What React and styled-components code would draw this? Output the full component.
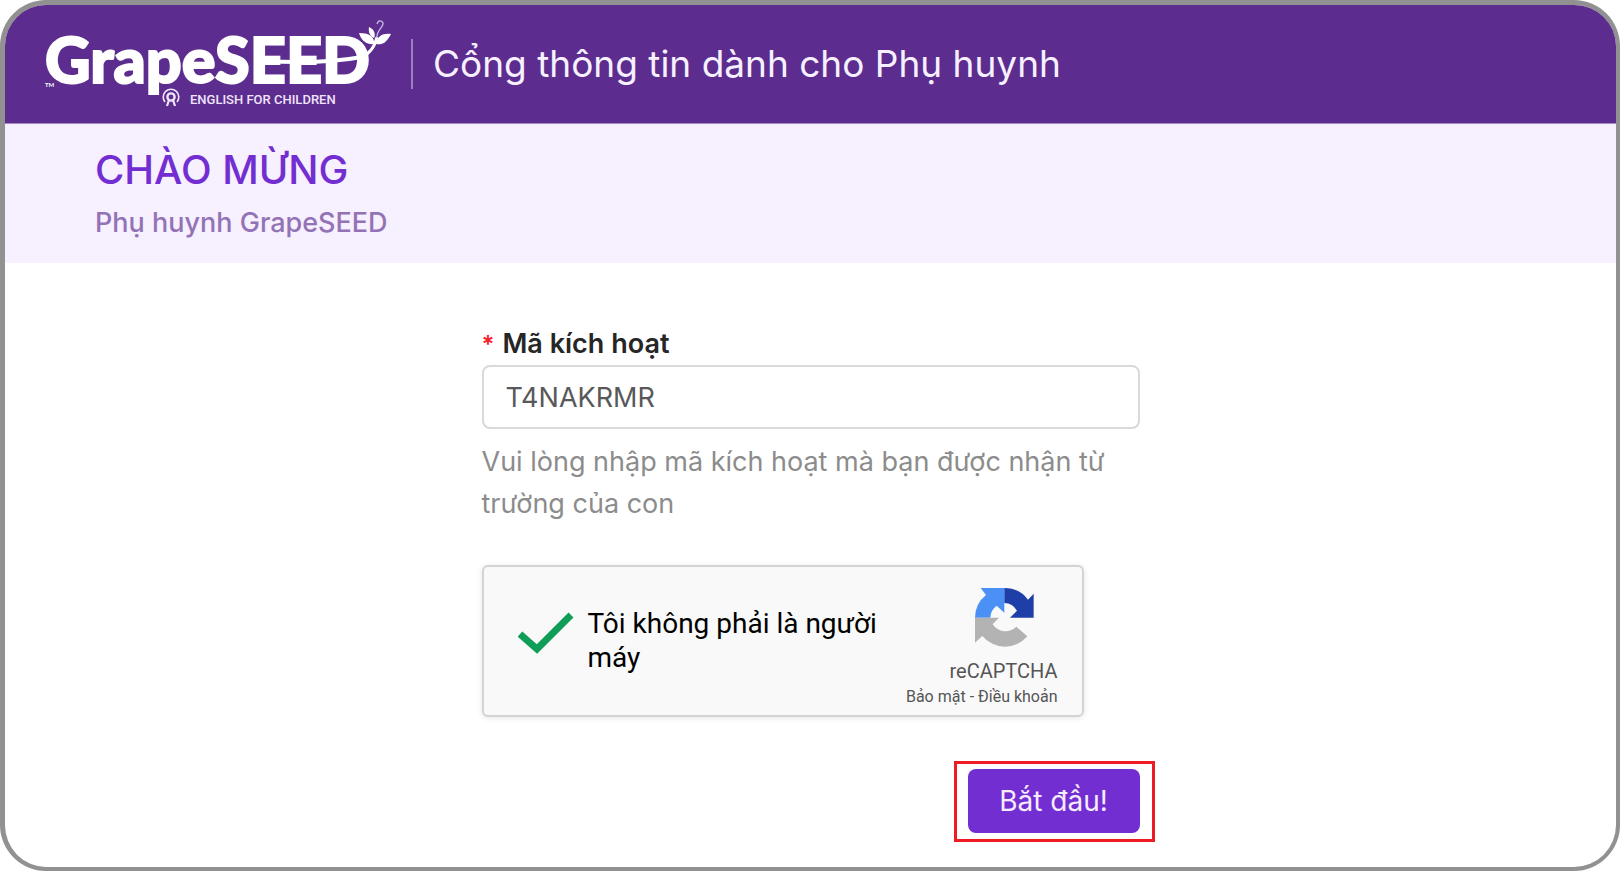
import React, { useState } from 'react'
import styled, { createGlobalStyle } from 'styled-components'

const GlobalStyle = createGlobalStyle`
    * {
        box-sizing:border-box;
        margin:0;
        padding:0;
    }
    body {
        background-color:white;
        font-family:Inter, "Liberation Sans", sans-serif;
    }
`
const Frame = styled.div`
    display:flex;
    flex-direction:column;
    min-height:100vh;
    border-style:solid;
    border-color:#919191;
    border-width:5px 4px 4px 5px;
    border-radius:46px;
    overflow:hidden;
    background-color:white;
`
const Header = styled.header`
    display:flex;
    align-items:center;
    height:119px;
    padding-left:38px;
    background-color:#5c2d8f;
    border-bottom:1px solid #a688c4;
`
const Logo = styled.svg`
    width:352px;
    height:96px;
    flex-shrink:0;
`
const Divider = styled.div`
    width:2px;
    height:50px;
    margin:0 20px 0 16px;
    background-color:#9d7fc0;
`
const PortalName = styled.h1`
    font-size:37px;
    line-height:48px;
    font-weight:400;
    color:#f7f0ff;
`
const Banner = styled.section`
    height:139px;
    padding:16px 90px;
    background-color:#f6f0ff;
`
const Welcome = styled.h2`
    font-size:40px;
    line-height:60px;
    font-weight:500;
    color:#722ed1;
`
const Audience = styled.p`
    font-size:27px;
    line-height:46px;
    font-weight:500;
    color:#9373b5;
`
const Form = styled.form`
    display:flex;
    flex-direction:column;
    width:100%;
    max-width:658px;
    margin:0 auto;
    padding:61px 0 24px;
`
const Label = styled.label`
    font-size:27px;
    line-height:40px;
    font-weight:600;
    color:#262626;
`
const Required = styled.span`
    margin-right:8px;
    font-size:24px;
    color:#f5222d;
`
const Input = styled.input`
    height:64px;
    padding:0 22px;
    border:2px solid #d9d9d9;
    border-radius:8px;
    font-family:inherit;
    font-size:27px;
    color:#595959;
    outline:none;
`
const Hint = styled.p`
    margin-top:12px;
    font-size:27px;
    line-height:42px;
    color:#8c8c8c;
`
const Captcha = styled.div`
    display:flex;
    justify-content:space-between;
    width:602px;
    max-width:100%;
    height:152px;
    margin-top:40px;
    padding:20px 24px 0 34px;
    border:2px solid #d3d3d3;
    border-radius:6px;
    box-shadow:0 1px 6px rgba(0,0,0,0.1);
    background-color:#f9f9f9;
    font-family:Roboto, sans-serif;
`
const Robot = styled.label`
    display:flex;
    align-items:flex-start;
    padding-top:20px;
    font-size:28px;
    line-height:34px;
    color:black;
`
const Tick = styled.input`
    position:absolute;
    opacity:0;
`
const CheckMark = styled.svg`
    width:56px;
    height:44px;
    flex-shrink:0;
    margin:4px 14px 0 0;
`
const RobotText = styled.span`
    width:300px;
`
const Brand = styled.div`
    display:flex;
    flex-direction:column;
    align-items:flex-end;
    font-size:20px;
    line-height:28px;
    color:#555;
`
const Arrows = styled.svg`
    width:62px;
    height:62px;
    margin:0 22px 8px 0;
`
const Terms = styled.div`
    font-size:16px;
    line-height:24px;
    white-space:nowrap;
`
const TermsLink = styled.a`
    color:inherit;
    text-decoration:none;
`
const Highlight = styled.div`
    align-self:flex-end;
    margin:44px -15px 0 0;
    padding:5px 12px 6px 11px;
    border:3px solid #ed1c24;
`
const Button = styled.button`
    display:block;
    width:172px;
    height:64px;
    border:none;
    border-radius:8px;
    background-color:#722ed1;
    color:#f5ecff;
    font-family:inherit;
    font-size:28px;
    cursor:pointer;
`

const GrapeSeedLogo = () => (
    <Logo viewBox="43 16 352 96" role="img" aria-label="GrapeSEED English for children">
        <g fill="white" fontFamily="Lato, sans-serif">
            <text x="45" y="83" fontSize="63" fontWeight="900" stroke="white" strokeWidth="2">GrapeSEED</text>
            <text x="45" y="87" fontSize="6" fontWeight="700">TM</text>
            <text x="190" y="104" fontSize="13" fontWeight="500" fontFamily="Roboto, sans-serif" fill="#f0e4fb">ENGLISH FOR CHILDREN</text>
        </g>
        {/* vine running through the letters and up to the leaves */}
        <path d="M264 61 C300 63 335 62 362 57" fill="none" stroke="white" strokeWidth="4"/>
        <path d="M360 58 C370 54 375 46 377 37" fill="none" stroke="white" strokeWidth="3"/>
        <path d="M377 38 C376 30 384 27 383 23 C382 20 378 20 377 24" fill="none" stroke="#cdb8e2" strokeWidth="1.3"/>
        <g fill="white">
            <path d="M359 33 C368 33 375 36 374 44 C366 45 361 40 359 33Z"/>
            <path d="M369 27 C374 29 376 34 374 38 C370 36 368 32 369 27Z"/>
            <path d="M391 34 C386 44 381 45 376 44 C377 36 383 33 391 34Z"/>
        </g>
        <g fill="none" stroke="#f0e4fb" strokeWidth="1.6">
            <path d="M165 102 A7.8 7.8 0 1 1 177 102"/>
            <circle cx="171" cy="97" r="3.6" strokeWidth="2.4"/>
            <path d="M169 100 L167 106 M173 100 L175 106" strokeWidth="2.2"/>
        </g>
    </Logo>
)

const App = () => {
    const [code, setCode] = useState('T4NAKRMR')
    const [human, setHuman] = useState(true)
    return (
        <Frame>
            <GlobalStyle/>
            <Header>
                <GrapeSeedLogo/>
                <Divider/>
                <PortalName>Cổng thông tin dành cho Phụ huynh</PortalName>
            </Header>
            <Banner>
                <Welcome>CHÀO MỪNG</Welcome>
                <Audience>Phụ huynh GrapeSEED</Audience>
            </Banner>
            <Form onSubmit={(e) => e.preventDefault()}>
                <Label htmlFor="code"><Required>*</Required>Mã kích hoạt</Label>
                <Input id="code" value={code} onChange={(e) => setCode(e.target.value)}/>
                <Hint>Vui lòng nhập mã kích hoạt mà bạn được nhận từ trường của con</Hint>
                <Captcha>
                    <Robot>
                        <Tick type="checkbox" checked={human} onChange={() => setHuman(!human)}/>
                        <CheckMark viewBox="0 0 56 44">
                            {human && <path d="M2 23 L19 38 L53 4" fill="none" stroke="#0f9d58" strokeWidth="7"/>}
                        </CheckMark>
                        <RobotText>Tôi không phải là người máy</RobotText>
                    </Robot>
                    <Brand>
                        <Arrows viewBox="0 0 186 186">
                            <path d="M3 92 A88 88 0 0 1 36 24 L20 3 H91 V77 L68 56 A46 46 0 0 0 49 92Z" fill="#4a90f5"/>
                            <path d="M91 3 A88 88 0 0 1 162 38 L179 20 V92 H108 L129 71 A46 46 0 0 0 91 48Z" fill="#1f3fa8"/>
                            <path d="M3 92 H75 L56 112 A46 46 0 0 0 127 119 L160 148 A88 88 0 0 1 25 147 L3 167Z" fill="#b3b3b3"/>
                        </Arrows>
                        reCAPTCHA
                        <Terms>
                            <TermsLink href="#privacy">Bảo mật</TermsLink> - <TermsLink href="#terms">Điều khoản</TermsLink>
                        </Terms>
                    </Brand>
                </Captcha>
                <Highlight>
                    <Button type="submit">Bắt đầu!</Button>
                </Highlight>
            </Form>
        </Frame>
    )
}

export default App
